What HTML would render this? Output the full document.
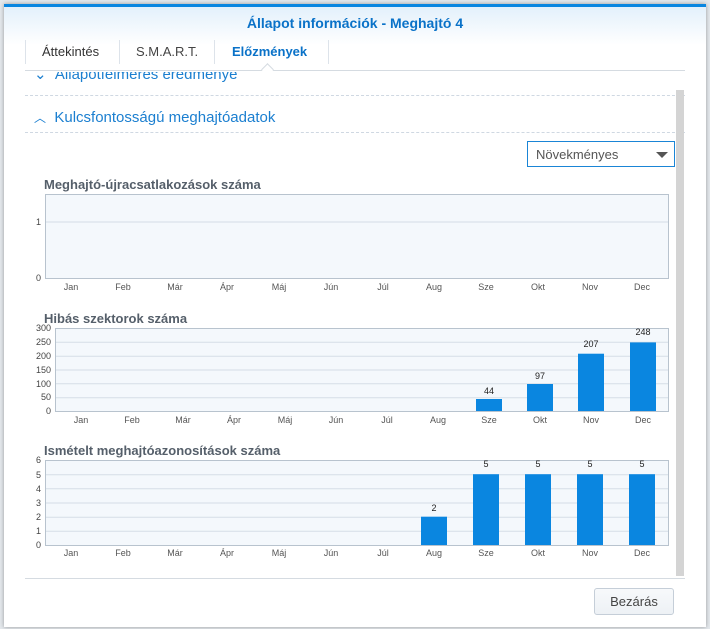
<!DOCTYPE html>
<html><head><meta charset="utf-8"><style>
body{margin:0;width:710px;height:629px;background:#e4e8ec;position:relative;overflow:hidden;font-family:"Liberation Sans",sans-serif}
.win{position:absolute;left:4px;top:4px;width:702px;height:620px;background:#fff;border-top:3px solid #0a86e0;box-shadow:0 0 4px rgba(0,0,0,.35)}
.hdr{position:absolute;left:0;top:0;width:702px;height:38px;background:linear-gradient(#e3f0fb,#fff)}
.abs{position:absolute;white-space:nowrap}
</style></head><body>
<div class="win"><div class="hdr"></div></div>
<div class="abs" style="left:0;width:710px;top:15px;text-align:center;color:#0a72c8;font-weight:bold;font-size:14px">Állapot információk - Meghajtó 4</div>
<div class="abs" style="left:25px;top:40px;width:1px;height:24px;background:#dde3ea"></div>
<div class="abs" style="left:119px;top:40px;width:1px;height:24px;background:#dde3ea"></div>
<div class="abs" style="left:214px;top:40px;width:1px;height:24px;background:#dde3ea"></div>
<div class="abs" style="left:328px;top:40px;width:1px;height:24px;background:#dde3ea"></div>
<div class="abs" style="left:42px;top:44px;font-size:13px;color:#333">Áttekintés</div>
<div class="abs" style="left:136px;top:44px;font-size:13px;color:#444">S.M.A.R.T.</div>
<div class="abs" style="left:232px;top:44px;font-size:13px;color:#0a72c8;font-weight:bold">Előzmények</div>
<div class="abs" style="left:25px;top:70px;width:660px;height:1px;background:#d5dbe1"></div>
<div class="abs" style="left:263px;top:65px;width:8px;height:8px;background:#fff;border-left:1px solid #d5dbe1;border-top:1px solid #d5dbe1;transform:rotate(45deg)"></div>
<div class="abs" style="left:0;top:72px;width:710px;height:18px;overflow:hidden"><div class="abs" style="left:34px;top:-7px;font-size:15px;color:#1b7fd0">⌄&nbsp; Állapotfelmérés eredménye</div></div>
<div class="abs" style="left:25px;top:95px;width:660px;border-top:1px dashed #cfd8e2"></div>
<div class="abs" style="left:34px;top:109px;font-size:15px;color:#1b7fd0"><span style="font-size:12px">︿</span>&nbsp; Kulcsfontosságú meghajtóadatok</div>
<div class="abs" style="left:25px;top:132px;width:660px;border-top:1px dashed #cfd8e2"></div>
<div class="abs" style="left:676px;top:90px;width:8px;height:486px;background:#d4d4d4"></div>
<div class="abs" style="left:527px;top:141px;width:148px;height:26px;border:1px solid #1a85d6;box-sizing:border-box"></div>
<div class="abs" style="left:536px;top:147px;font-size:13px;color:#555">Növekményes</div>
<div class="abs" style="left:656px;top:152px;width:0;height:0;border-left:6px solid transparent;border-right:6px solid transparent;border-top:6px solid #555"></div>
<svg class="abs" style="left:0;top:0" width="710" height="629" font-family="Liberation Sans,sans-serif">
<g font-weight="bold" font-size="13" fill="#555f6a">
<text x="44" y="189">Meghajtó-újracsatlakozások száma</text>
<text x="44" y="323">Hibás szektorok száma</text>
<text x="44" y="455">Ismételt meghajtóazonosítások száma</text>
</g>
<rect x="45.5" y="194.5" width="623" height="84" fill="#f4f8fc" stroke="#b8c3ce"/>
<line x1="46" y1="222" x2="668" y2="222" stroke="#d5dde6"/>
<g font-size="9" fill="#444" text-anchor="end"><text x="41" y="225">1</text><text x="41" y="281">0</text></g>
<rect x="55.5" y="328.5" width="613" height="83" fill="#f4f8fc" stroke="#b8c3ce"/>
<g stroke="#d5dde6"><line x1="56" y1="342.3" x2="668" y2="342.3"/><line x1="56" y1="356.2" x2="668" y2="356.2"/><line x1="56" y1="370" x2="668" y2="370"/><line x1="56" y1="383.8" x2="668" y2="383.8"/><line x1="56" y1="397.7" x2="668" y2="397.7"/></g>
<g font-size="9" fill="#444" text-anchor="end"><text x="51" y="331">300</text><text x="51" y="345">250</text><text x="51" y="359">200</text><text x="51" y="373">150</text><text x="51" y="387">100</text><text x="51" y="400">50</text><text x="51" y="414">0</text></g>
<g fill="#0a86e0"><rect x="476" y="399" width="26" height="12"/><rect x="527" y="384" width="26" height="27"/><rect x="578" y="353.7" width="26" height="57.3"/><rect x="630" y="342.4" width="26" height="68.6"/></g>
<g font-size="9" fill="#222" text-anchor="middle"><text x="489" y="394">44</text><text x="540" y="379">97</text><text x="591" y="347">207</text><text x="643" y="335">248</text></g>
<rect x="45.5" y="460.5" width="623" height="85" fill="#f4f8fc" stroke="#b8c3ce"/>
<g stroke="#d5dde6"><line x1="46" y1="474.7" x2="668" y2="474.7"/><line x1="46" y1="488.8" x2="668" y2="488.8"/><line x1="46" y1="503" x2="668" y2="503"/><line x1="46" y1="517.2" x2="668" y2="517.2"/><line x1="46" y1="531.3" x2="668" y2="531.3"/></g>
<g font-size="9" fill="#444" text-anchor="end"><text x="41" y="463">6</text><text x="41" y="478">5</text><text x="41" y="492">4</text><text x="41" y="506">3</text><text x="41" y="520">2</text><text x="41" y="534">1</text><text x="41" y="548">0</text></g>
<g fill="#0a86e0"><rect x="421" y="516.7" width="26" height="28.3"/><rect x="473" y="474.2" width="26" height="70.8"/><rect x="525" y="474.2" width="26" height="70.8"/><rect x="577" y="474.2" width="26" height="70.8"/><rect x="629" y="474.2" width="26" height="70.8"/></g>
<g font-size="9" fill="#222" text-anchor="middle"><text x="434" y="511">2</text><text x="486" y="467">5</text><text x="538" y="467">5</text><text x="590" y="467">5</text><text x="642" y="467">5</text></g>
<g font-size="9" fill="#555" text-anchor="middle">
<text x="71" y="290">Jan</text><text x="123" y="290">Feb</text><text x="175" y="290">Már</text><text x="227" y="290">Ápr</text><text x="279" y="290">Máj</text><text x="331" y="290">Jún</text><text x="383" y="290">Júl</text><text x="434" y="290">Aug</text><text x="486" y="290">Sze</text><text x="538" y="290">Okt</text><text x="590" y="290">Nov</text><text x="642" y="290">Dec</text>
<text x="81" y="423">Jan</text><text x="132" y="423">Feb</text><text x="183" y="423">Már</text><text x="234" y="423">Ápr</text><text x="285" y="423">Máj</text><text x="336" y="423">Jún</text><text x="387" y="423">Júl</text><text x="438" y="423">Aug</text><text x="489" y="423">Sze</text><text x="540" y="423">Okt</text><text x="591" y="423">Nov</text><text x="643" y="423">Dec</text>
<text x="71" y="556">Jan</text><text x="123" y="556">Feb</text><text x="175" y="556">Már</text><text x="227" y="556">Ápr</text><text x="279" y="556">Máj</text><text x="331" y="556">Jún</text><text x="383" y="556">Júl</text><text x="434" y="556">Aug</text><text x="486" y="556">Sze</text><text x="538" y="556">Okt</text><text x="590" y="556">Nov</text><text x="642" y="556">Dec</text>
</g>
</svg>
<div class="abs" style="left:25px;top:578px;width:660px;height:1px;background:#d5dbe1"></div>
<div class="abs" style="left:594px;top:588px;width:80px;height:27px;border:1px solid #c5ced8;border-radius:3px;background:linear-gradient(#f7f9fb,#edf1f5);box-sizing:border-box;text-align:center;line-height:25px;font-size:13px;color:#444">Bezárás</div>
</body></html>
